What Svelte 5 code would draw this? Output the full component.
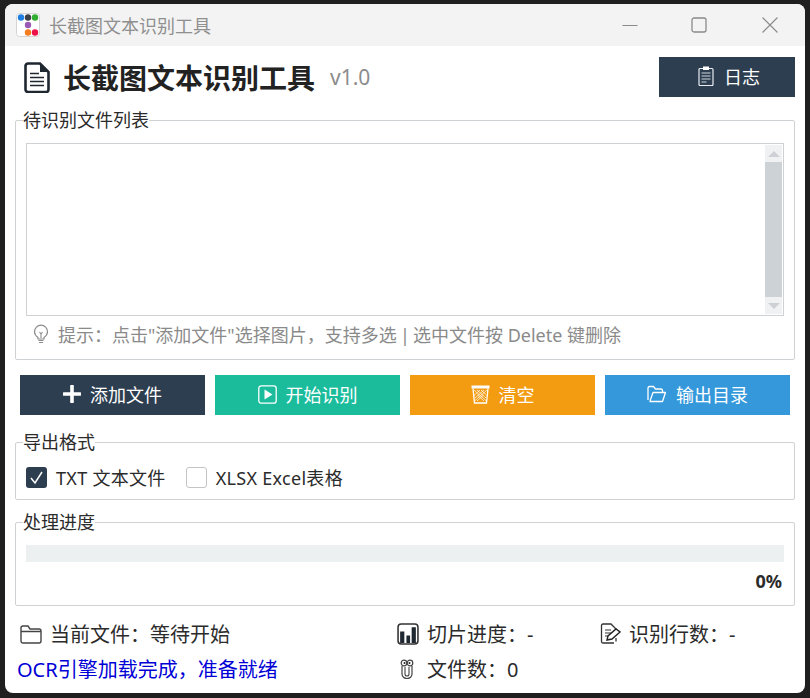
<script>
    let exportTxt = true
    let exportXlsx = false
    let progress = 0

    const buttons = [
        { label: '添加文件', cls: 'navy', icon: 'plus' },
        { label: '开始识别', cls: 'green', icon: 'play' },
        { label: '清空', cls: 'orange', icon: 'trash' },
        { label: '输出目录', cls: 'blue', icon: 'folder' }
    ]
</script>

<div class="desktop">
    <div class="window">
        <div class="titlebar">
            <svg class="appicon" width="24" height="24" viewBox="0 0 24 24">
                <rect x="0.5" y="0.5" width="23" height="23" rx="3" fill="#fff" stroke="#d4d4d4"/>
                <circle cx="5" cy="4.500" r="3.200" fill="#1f7fe0"/>
                <circle cx="12" cy="4.500" r="3.200" fill="#3c3f44"/>
                <circle cx="19" cy="4.500" r="3.200" fill="#2fae2f"/>
                <circle cx="12" cy="12" r="3.200" fill="#9b59b6"/>
                <circle cx="12" cy="19.500" r="3.200" fill="#f57c1f"/>
                <circle cx="19" cy="19.500" r="3.200" fill="#ee1048"/>
            </svg>
            <span class="apptitle">长截图文本识别工具</span>
            <div class="controls">
                <svg class="min" width="16" height="16" viewBox="0 0 16 16"><path d="M0.5 8.5h15" stroke="#8a8a8a" fill="none"/></svg>
                <svg width="16" height="16" viewBox="0 0 16 16"><rect x="1" y="1" width="14" height="14" rx="2" stroke="#8a8a8a" stroke-width="1.3" fill="none"/></svg>
                <svg width="16" height="16" viewBox="0 0 16 16"><path d="M0.5 0.5l15 15M15.5 0.5l-15 15" stroke="#8a8a8a" stroke-width="1.1" fill="none"/></svg>
            </div>
        </div>

        <div class="content">
            <div class="header">
                <svg class="docicon" width="26" height="31" viewBox="0 0 26 31">
                    <path d="M4 1.500h12l8.500 8.500v17.500a2.500 2.500 0 0 1-2.500 2.500H4a2.500 2.500 0 0 1-2.500-2.500V4A2.500 2.500 0 0 1 4 1.500z" fill="#fff" stroke="#1f2730" stroke-width="2.600"/>
                    <path d="M16 1.500v8.500h8.500z" fill="#1f2730"/>
                    <path d="M6 11.500h9M6 15.500h14M6 19.500h14M6 23.500h14" stroke="#1f2730" stroke-width="1.300"/>
                </svg>
                <h1>长截图文本识别工具</h1>
                <span class="version">v1.0</span>
                <button class="logbtn">
                    <svg width="16" height="20" viewBox="0 0 16 20">
                        <rect x="1" y="2.500" width="14" height="17" rx="1" fill="none" stroke="#e8edf2" stroke-width="1.200"/>
                        <rect x="5" y="0.500" width="6" height="3.500" fill="#fff"/>
                        <path d="M3.500 7h9M3.500 10h9M3.500 13h9M3.500 16h5" stroke="#cfd6dc" stroke-width="1.100"/>
                    </svg>
                    日志
                </button>
            </div>

            <fieldset class="listgroup">
                <legend>待识别文件列表</legend>
                <div class="listbox">
                    <div class="scrollbar">
                        <div class="arrow"><i class="up"></i></div>
                        <div class="thumb"></div>
                        <div class="arrow"><i class="down"></i></div>
                    </div>
                </div>
                <div class="hint">
                    <svg width="16" height="20" viewBox="0 0 16 20">
                        <path d="M5 13.500C3 12 1.500 10.200 1.500 7.700a6.500 6.500 0 0 1 13 0c0 2.500-1.500 4.300-3.500 5.800v1.500H5z" fill="none" stroke="#8c8c8c" stroke-width="1.200"/>
                        <path d="M5.500 16.500h5M6 18.500h4M6.500 8l1.500 2 1.500-2M8 10v4" stroke="#8c8c8c" stroke-width="1.100" fill="none"/>
                    </svg>
                    <span>提示：点击"添加文件"选择图片，支持多选 <span class="sep">|</span> 选中文件按 Delete 键删除</span>
                </div>
            </fieldset>

            <div class="actions">
                {#each buttons as b}
                    <button class="action {b.cls}">
                        {#if b.icon === 'plus'}
                            <svg width="18" height="18" viewBox="0 0 18 18"><path d="M9 1v16M1 9h16" stroke="#fff" stroke-width="3.600" stroke-linecap="round"/></svg>
                        {:else if b.icon === 'play'}
                            <svg width="19" height="19" viewBox="0 0 19 19"><rect x="0.800" y="0.800" width="17.400" height="17.400" rx="2.500" fill="none" stroke="#fff" stroke-width="1.300"/><path d="M6.500 4.500l8 5-8 5z" fill="#fff"/></svg>
                        {:else if b.icon === 'trash'}
                            <svg width="19" height="20" viewBox="0 0 19 20"><path d="M0.500 1.500h18v3H0.500z" fill="#fff"/><path d="M2 4.500l1.500 14.500h12L17 4.500" fill="none" stroke="#fff" stroke-width="1.300"/><path d="M3 6l12.500 11M6 6l9 8M10 6l5.500 5M16 6L3.500 17M13 6l-9 8M9 6L3 11.500M6 17l6.500-6M13 17L6.500 11" stroke="#fff" stroke-width="0.700"/></svg>
                        {:else}
                            <svg width="20" height="18" viewBox="0 0 20 18"><path d="M2.500 16.500h13l3-9H6L3 16M1 15V3a1.500 1.500 0 0 1 1.500-1.500h4l2 2.500H14a1.500 1.500 0 0 1 1.500 1.500V7.500" fill="none" stroke="#fff" stroke-width="1.300" stroke-linejoin="round"/></svg>
                        {/if}
                        {b.label}
                    </button>
                {/each}
            </div>

            <fieldset class="formatgroup">
                <legend>导出格式</legend>
                <label class="check">
                    <input type="checkbox" bind:checked={exportTxt}>
                    <span class="box">
                        {#if exportTxt}
                            <svg width="21" height="21" viewBox="0 0 21 21"><path d="M5 11l4 5 7-11" stroke="#fff" stroke-width="1.500" fill="none"/></svg>
                        {/if}
                    </span>
                    TXT 文本文件
                </label>
                <label class="check">
                    <input type="checkbox" bind:checked={exportXlsx}>
                    <span class="box">
                        {#if exportXlsx}
                            <svg width="21" height="21" viewBox="0 0 21 21"><path d="M5 11l4 5 7-11" stroke="#fff" stroke-width="1.500" fill="none"/></svg>
                        {/if}
                    </span>
                    XLSX Excel表格
                </label>
            </fieldset>

            <fieldset class="progressgroup">
                <legend>处理进度</legend>
                <div class="track"><div class="fill" style="width: {progress}%"></div></div>
                <div class="percent">{progress}%</div>
            </fieldset>

            <div class="status">
                <div class="stat">
                    <svg width="22" height="20" viewBox="0 0 22 20"><path d="M1 4a2 2 0 0 1 2-2h5l2 3h9a2 2 0 0 1 2 2v10a2 2 0 0 1-2 2H3a2 2 0 0 1-2-2zM1 7.500h20" fill="none" stroke="#444" stroke-width="1.400"/></svg>
                    当前文件：等待开始
                </div>
                <div class="stat">
                    <svg width="22" height="22" viewBox="0 0 21 21"><rect x="1" y="1" width="19" height="19" rx="3" fill="none" stroke="#333" stroke-width="1.500"/><path d="M3 19V8h4v11zM9 19V12h3.500v7zM14 19V4h4v15z" fill="#1f2730"/></svg>
                    切片进度：-
                </div>
                <div class="stat">
                    <svg width="21" height="21" viewBox="0 0 21 21"><path d="M14 20H3a1.500 1.500 0 0 1-1.500-1.500V2.500A1.500 1.500 0 0 1 3 1h8l5 5v3M16 15v3.500" fill="none" stroke="#333" stroke-width="1.300"/><path d="M5 7h6M5 10h6M5 13h3" stroke="#333"/><path d="M7 17l1-4 8-7 4 3-8 7z" fill="#fff" stroke="#222" stroke-width="1.400"/></svg>
                    识别行数：-
                </div>
                <div class="message">OCR引擎加载完成，准备就绪</div>
                <div class="stat">
                    <svg class="clip" width="16" height="21" viewBox="0 0 16 21">
                        <path d="M3 8v8a5 4.500 0 0 0 10 0V8" fill="none" stroke="#444" stroke-width="1.200"/>
                        <path d="M6 9v7a2 2 0 0 0 4 0V9" fill="none" stroke="#444" stroke-width="1.100"/>
                        <circle cx="5" cy="5" r="2.800" fill="#fff" stroke="#444" stroke-width="1.200"/>
                        <circle cx="11" cy="5" r="2.800" fill="#fff" stroke="#444" stroke-width="1.200"/>
                        <circle cx="5.500" cy="5" r="1" fill="#222"/>
                        <circle cx="10.500" cy="5" r="1" fill="#222"/>
                    </svg>
                    文件数：0
                </div>
            </div>
        </div>
    </div>
</div>

<style>
    :global(body){
        margin: 0;
        background: #1f1f1f;
    }
    .desktop{
        width: 810px;
        height: 698px;
        box-sizing: border-box;
        padding: 4px 5px 5px;
        background: #1f1f1f;
        font-family: "Noto Sans", "Noto Sans CJK SC", sans-serif;
        font-size: 18px;
        color: #2b2b2b;
        overflow: hidden;
    }
    .window{
        height: 100%;
        background: #fff;
        border-radius: 8px;
        overflow: hidden;
        display: flex;
        flex-direction: column;
    }
    .titlebar{
        height: 42px;
        flex: none;
        background: #f3f3f3;
        display: flex;
        align-items: center;
        padding-left: 11px;
        gap: 9px;
    }
    .appicon{
        margin-top: -1px;
    }
    .apptitle{
        font-size: 18px;
        color: #8f8f8f;
    }
    .controls{
        margin-left: auto;
        display: flex;
        align-items: center;
        gap: 55px;
        padding-right: 27px;
    }
    .min{
        margin-right: -2px;
    }
    .content{
        flex: 1;
        padding: 11px 10px 0;
        display: flex;
        flex-direction: column;
    }
    .header{
        height: 40px;
        display: flex;
        align-items: center;
        padding-left: 9px;
    }
    .docicon{
        margin-right: 13px;
    }
    h1{
        margin: 2px 0 0;
        font-size: 28px;
        font-weight: 700;
        color: #222;
        line-height: 40px;
    }
    .version{
        font-size: 21px;
        color: #8c8c8c;
        margin-left: 15px;
    }
    button{
        border: none;
        color: #fff;
        font: inherit;
        padding: 0 0 2px;
        display: flex;
        align-items: center;
        justify-content: center;
        gap: 9px;
    }
    .logbtn{
        margin-left: auto;
        width: 136px;
        height: 40px;
        background: #2c3e50;
        gap: 10px;
        padding-left: 4px;
    }
    fieldset{
        margin: 0;
        padding: 0;
        border: 1px solid #cfd2d4;
        border-radius: 2px;
        box-sizing: border-box;
        min-width: 0;
    }
    legend{
        margin-left: -3px;
        padding: 0;
        font-size: 18px;
        line-height: 24px;
        color: #2b2b2b;
    }
    .listgroup{
        height: 252px;
        margin-top: 11px;
        padding: 11px 10px 0;
    }
    .listbox{
        height: 173px;
        box-sizing: border-box;
        border: 1px solid #cfd2d4;
        display: flex;
        justify-content: flex-end;
        padding: 1px;
    }
    .scrollbar{
        width: 17px;
        display: flex;
        flex-direction: column;
        background: #f0f1f2;
    }
    .arrow{
        height: 17px;
        flex: none;
        display: flex;
        align-items: center;
        justify-content: center;
    }
    .arrow i{
        width: 0;
        height: 0;
        border-left: 6px solid transparent;
        border-right: 6px solid transparent;
    }
    .arrow .up{
        border-bottom: 6px solid #cdd1d6;
    }
    .arrow .down{
        border-top: 6px solid #cdd1d6;
    }
    .thumb{
        flex: 1;
        background: #cdd2d7;
    }
    .hint{
        height: 39px;
        box-sizing: border-box;
        padding: 0 0 3px 7px;
        display: flex;
        align-items: center;
        gap: 9px;
        color: #8a8a8a;
        font-size: 18px;
    }
    .sep{
        margin: 0 -1.5px;
    }
    .actions{
        display: flex;
        gap: 10px;
        padding: 0 5px;
        margin-top: 15px;
    }
    .action{
        width: 185px;
        height: 40px;
    }
    .navy{
        background: #2c3e50;
    }
    .green{
        background: #1abc9c;
    }
    .orange{
        background: #f39c12;
    }
    .blue{
        background: #3498db;
    }
    .formatgroup{
        height: 70px;
        margin-top: 15px;
        padding: 0 10px 4px;
        display: flex;
        align-items: center;
        gap: 20px;
    }
    .check{
        display: flex;
        align-items: center;
        gap: 9px;
        height: 46px;
        letter-spacing: 0.3px;
    }
    .check input{
        position: absolute;
        opacity: 0;
    }
    .box{
        width: 21px;
        height: 21px;
        box-sizing: border-box;
        border: 1px solid #c4c4c4;
        border-radius: 3px;
        background: #fff;
        display: block;
        position: relative;
    }
    .box svg{
        position: absolute;
        left: -1px;
        top: -1px;
        background: #2c3e50;
        border-radius: 3px;
    }
    .progressgroup{
        height: 96px;
        margin-top: 10px;
        padding: 11px 10px 0;
    }
    .track{
        height: 17px;
        background: #ecf0f1;
    }
    .fill{
        height: 100%;
        background: #1abc9c;
    }
    .percent{
        text-align: right;
        font-weight: 700;
        color: #2b2b2b;
        line-height: 24px;
        margin-top: 7px;
        padding-right: 2px;
    }
    .status{
        display: grid;
        grid-template-columns: 377px 203px 1fr;
        grid-template-rows: 35px 35px;
        align-items: center;
        padding-left: 5px;
        margin-top: 10px;
        font-size: 20px;
    }
    .stat{
        display: flex;
        align-items: center;
        gap: 8px;
    }
    .clip{
        margin-left: 2px;
        margin-right: 4px;
    }
    .message{
        color: #0000d6;
        margin-left: -3px;
    }
</style>
